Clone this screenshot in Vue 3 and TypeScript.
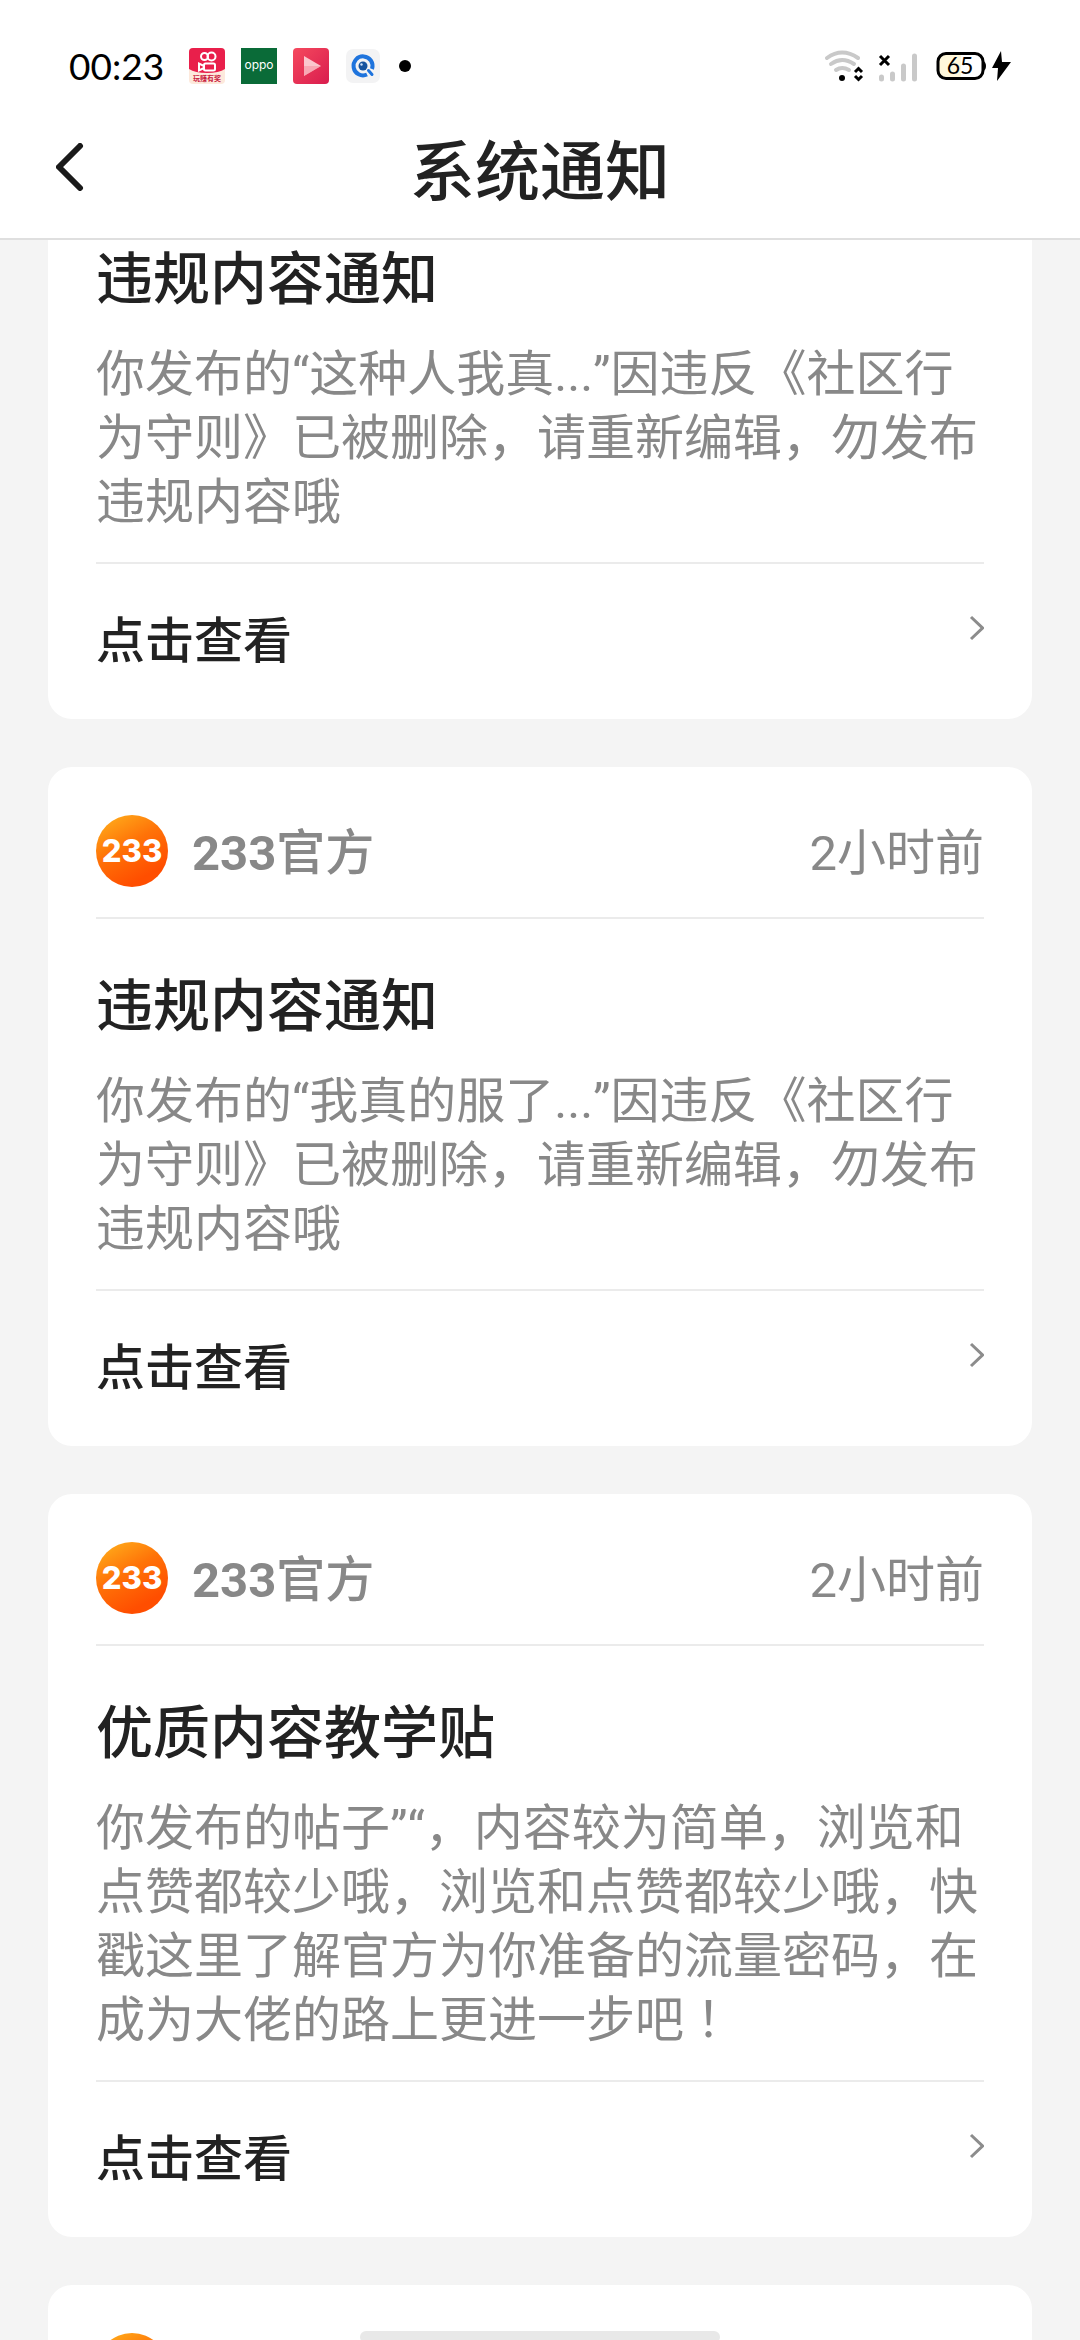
<script setup lang="ts">
interface Notice {
  title: string
  body: string
  mark?: string
}

const author = { number: '233', label: '官方' }
const time = '2小时前'
const action = '点击查看'

// The list is scrolled so that only the lower part of this notice shows.
const partialNotice: Notice = {
  title: '违规内容通知',
  body: '你发布的“这种人我真...”因违反《社区行为守则》已被删除，请重新编辑，勿发布违规内容哦',
}

const notices: Notice[] = [
  {
    title: '违规内容通知',
    body: '你发布的“我真的服了...”因违反《社区行为守则》已被删除，请重新编辑，勿发布违规内容哦',
  },
  {
    title: '优质内容教学贴',
    body: '你发布的帖子”“，内容较为简单，浏览和点赞都较少哦，浏览和点赞都较少哦，快戳这里了解官方为你准备的流量密码，在成为大佬的路上更进一步吧',
    mark: '！',
  },
]
</script>

<template>
  <div class="screen">
    <svg class="defs" aria-hidden="true">
      <defs>
        <linearGradient id="avatar-fill" x1="0.1" y1="0" x2="0.6" y2="0.9">
          <stop offset="0" stop-color="#ffb01c" />
          <stop offset="0.5" stop-color="#ff7308" />
          <stop offset="1" stop-color="#ff4e00" />
        </linearGradient>
        <linearGradient id="play-fill" x1="0" y1="0" x2="1" y2="1">
          <stop offset="0" stop-color="#f5495e" />
          <stop offset="1" stop-color="#d91c4e" />
        </linearGradient>
        <symbol id="avatar" viewBox="0 0 72 72">
          <circle cx="36" cy="36" r="36" fill="url(#avatar-fill)" />
          <text x="36" y="47" text-anchor="middle" class="avatar-text">233</text>
        </symbol>
        <symbol id="chevron" viewBox="0 0 16 26">
          <path d="M3 2 L14.500 13 L3 24" fill="none" stroke="#8c8c8c" stroke-width="3" />
        </symbol>
      </defs>
    </svg>

    <header class="header">
      <div class="status">
        <span class="clock">00:23</span>
        <svg class="app" viewBox="0 0 36 36" aria-hidden="true">
          <rect width="36" height="36" rx="4" fill="#fde9dc" />
          <path d="M4 0 H32 A4 4 0 0 1 36 4 V21 Q30 25 18 25 Q6 25 0 21 V4 A4 4 0 0 1 4 0 Z" fill="#e91f4b" />
          <g fill="none" stroke="#fff" stroke-width="2">
            <circle cx="15.500" cy="8.500" r="3.500" />
            <circle cx="22.500" cy="8.500" r="4" />
            <rect x="15" y="15.500" width="11" height="7" rx="1.500" />
            <path d="M15 18 L10 15.500 V22.500 L15 20" />
          </g>
          <text x="18" y="33" text-anchor="middle" class="app-caption">玩赚有奖</text>
        </svg>
        <svg class="app" viewBox="0 0 36 36" aria-hidden="true">
          <rect width="36" height="36" fill="#0a6b38" />
          <text x="18" y="21" text-anchor="middle" class="oppo">oppo</text>
        </svg>
        <svg class="app" viewBox="0 0 36 36" aria-hidden="true">
          <rect width="36" height="36" rx="4" fill="url(#play-fill)" />
          <path d="M11 8 L28 18 L11 28 Z" fill="#fbc6cd" />
          <path d="M11 18 H28 L11 28 Z" fill="#f58a9c" opacity="0.5" />
        </svg>
        <svg class="app" viewBox="0 0 36 36" aria-hidden="true">
          <rect x="1" y="1" width="34" height="34" rx="7" fill="#f3f3f4" />
          <path d="M22 26.500 A9.500 9.500 0 1 1 27 21" fill="none" stroke="#1f74dd" stroke-width="4" />
          <path d="M23.500 22.500 L27 26.500" stroke="#1f74dd" stroke-width="3" stroke-linecap="round" />
          <circle cx="18" cy="18" r="4.500" fill="#15539f" />
          <circle cx="16.500" cy="16.500" r="1.200" fill="#cfe2fa" />
        </svg>
        <span class="dot"></span>
        <svg class="indicators" viewBox="0 0 190 36" aria-hidden="true">
          <g fill="none" stroke="#c9c9c9" stroke-width="4" stroke-linecap="round">
            <path d="M3 10 Q18 -1 34 10" />
            <path d="M7 16 Q18 8 30 16" />
            <path d="M12 22 Q18 18 25 22" />
          </g>
          <circle cx="18" cy="30" r="3" />
          <g fill="none" stroke="#000" stroke-width="3">
            <path d="M31 24 L34.500 20.500 L38 24 M31 28 L34.500 31.500 L38 28" />
            <path d="M56 8 L65 17 M65 8 L56 17" />
          </g>
          <g stroke="#c9c9c9" stroke-width="5" stroke-linecap="round">
            <path d="M57.500 29 V31 M68.500 26 V31 M79.500 18 V31 M90.500 8 V31" />
          </g>
          <rect x="114" y="5.500" width="45" height="25" rx="8" fill="#fff" />
          <path d="M122 5 H137 V31 H122 Q114 31 114 23 V13 Q114 5 122 5 Z" fill="#fff8dc" />
          <rect x="114" y="5.500" width="45" height="25" rx="8" fill="none" stroke="#000" stroke-width="3" />
          <path d="M159 13 Q162 14 162 18 Q162 22 159 23 Z" />
          <text x="136" y="26" text-anchor="middle" class="battery-text">65</text>
          <path d="M177 3 L168 20 H174 L173 33 L187 14 H178 Z" />
        </svg>
      </div>
      <div class="nav">
        <button class="back" type="button" aria-label="返回">
          <svg viewBox="0 0 28 48" aria-hidden="true">
            <path d="M24 3 L3 24 L24 45" fill="none" stroke="#1a1a1a" stroke-width="6" stroke-linecap="round" stroke-linejoin="round" />
          </svg>
        </button>
        <h1>系统通知</h1>
      </div>
    </header>

    <main class="list">
      <article class="card card-partial">
        <h2>{{ partialNotice.title }}</h2>
        <p>{{ partialNotice.body }}</p>
        <a class="more" href="#">
          <span>{{ action }}</span>
          <svg aria-hidden="true"><use href="#chevron" /></svg>
        </a>
      </article>

      <article v-for="(notice, i) in notices" :key="i" class="card">
        <div class="meta">
          <svg class="avatar" aria-hidden="true"><use href="#avatar" /></svg>
          <span class="author"><b>{{ author.number }}</b>{{ author.label }}</span>
          <time>{{ time }}</time>
        </div>
        <h2>{{ notice.title }}</h2>
        <p>{{ notice.body }}<span v-if="notice.mark" class="mark">{{ notice.mark }}</span></p>
        <a class="more" href="#">
          <span>{{ action }}</span>
          <svg aria-hidden="true"><use href="#chevron" /></svg>
        </a>
      </article>

      <article class="card">
        <div class="meta">
          <svg class="avatar" aria-hidden="true"><use href="#avatar" /></svg>
        </div>
      </article>
    </main>

    <div class="home-bar"></div>
  </div>
</template>

<style>
body {
  margin: 0;
}
</style>

<style scoped>
.screen {
  position: relative;
  display: flex;
  flex-direction: column;
  height: 100vh;
  overflow: hidden;
  background: #f4f4f4;
  color: #222;
  font-family: Roboto, "Noto Sans CJK SC", sans-serif;
  font-kerning: none;
}

.defs {
  position: absolute;
  width: 0;
  height: 0;
}

.header {
  flex: none;
  background: #fff;
  border-bottom: 2px solid #dfdfdf;
}

.status {
  display: flex;
  align-items: center;
  gap: 16px;
  height: 60px;
  padding: 36px 66px 0 69px;
}

.clock {
  margin-right: 9px;
  color: #000;
  font-family: Lato, sans-serif;
  font-size: 37px;
  line-height: 60px;
}

.app {
  width: 36px;
  height: 36px;
}

.app-caption {
  fill: #c8203c;
  font-size: 7px;
  font-weight: 700;
}

.oppo {
  fill: #fff;
  font-family: Inter, sans-serif;
  font-size: 12px;
}

.dot {
  width: 12px;
  height: 12px;
  margin-left: 2px;
  border-radius: 50%;
  background: #000;
}

.indicators {
  width: 190px;
  height: 36px;
  margin-left: auto;
}

.battery-text {
  font-family: Lato, sans-serif;
  font-size: 23px;
}

.nav {
  display: grid;
  grid-template-columns: 1fr auto 1fr;
  align-items: center;
  height: 142px;
  padding: 0 56px;
}

.back {
  display: flex;
  justify-self: start;
  padding: 0;
  border: 0;
  background: none;
}

.back svg {
  width: 28px;
  height: 48px;
}

h1 {
  margin: 0;
  padding-top: 12px;
  font-size: 65px;
  font-weight: 500;
  line-height: 96px;
}

.list {
  display: flex;
  flex: 1;
  flex-direction: column;
  gap: 48px;
  min-height: 0;
  padding: 0 48px;
  overflow: hidden;
}

.card {
  flex: none;
  padding: 0 48px;
  border-radius: 24px;
  background: #fff;
}

.card-partial {
  padding-top: 2px;
  border-radius: 0 0 24px 24px;
}

.meta {
  display: flex;
  align-items: center;
  gap: 24px;
  margin-bottom: 50px;
  padding: 48px 0 30px;
  border-bottom: 2px solid #ebebeb;
  color: #888;
  font-size: 49px;
  line-height: 64px;
}

.avatar {
  width: 72px;
  height: 72px;
}

.avatar-text {
  fill: #fff;
  font-family: Inter, sans-serif;
  font-size: 31px;
  font-weight: 800;
}

.author,
time {
  padding-top: 6px;
}

.author {
  font-weight: 500;
}

.author b {
  font-weight: 700;
}

time {
  margin-left: auto;
}

h2 {
  margin: 0 0 25px;
  font-size: 57px;
  font-weight: 500;
  line-height: 76px;
}

p {
  margin: 0;
  padding-bottom: 27px;
  border-bottom: 2px solid #ebebeb;
  color: #888;
  font-size: 49px;
  line-height: 64px;
}

.mark {
  font-family: Roboto, "Noto Sans CJK TC", sans-serif;
}

.more {
  display: flex;
  align-items: flex-start;
  justify-content: space-between;
  padding: 46px 0 45px;
  color: #222;
  font-size: 49px;
  font-weight: 500;
  line-height: 64px;
  text-decoration: none;
}

.more svg {
  width: 16px;
  height: 26px;
  margin-top: 5px;
}

.home-bar {
  position: absolute;
  bottom: -3px;
  left: 50%;
  width: 360px;
  height: 12px;
  border-radius: 6px;
  background: #e8e8e8;
  transform: translateX(-50%);
}
</style>
